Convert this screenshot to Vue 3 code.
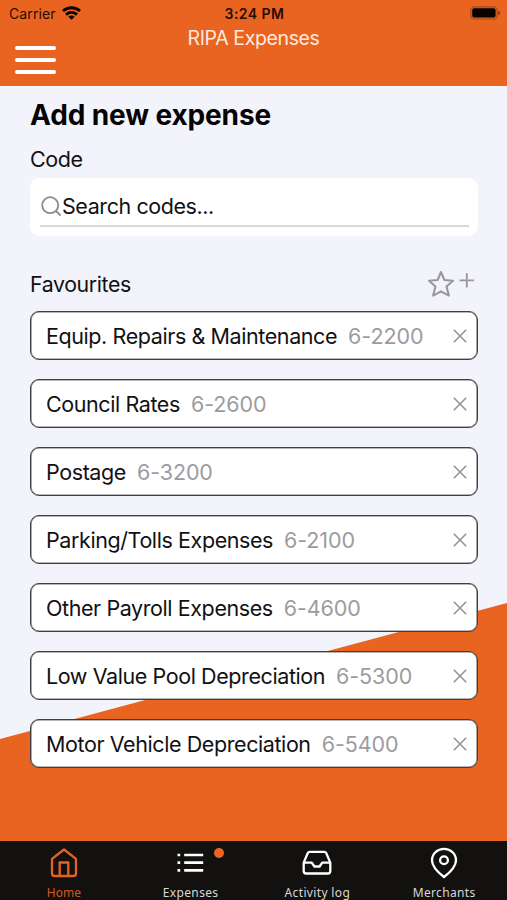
<script setup>
const favourites = [
  { name: 'Equip. Repairs & Maintenance', code: '6-2200' },
  { name: 'Council Rates', code: '6-2600' },
  { name: 'Postage', code: '6-3200' },
  { name: 'Parking/Tolls Expenses', code: '6-2100' },
  { name: 'Other Payroll Expenses', code: '6-4600' },
  { name: 'Low Value Pool Depreciation', code: '6-5300' },
  { name: 'Motor Vehicle Depreciation', code: '6-5400' },
]
</script>

<template>
  <div class="screen">
    <header class="header">
      <div class="status">
        <div class="carrier">
          <span>Carrier</span>
          <svg class="wifi" width="19" height="14" viewBox="0 0 19 14">
            <g fill="none" stroke="currentColor" stroke-width="2.9">
              <path d="M1 5C5.8 .6 13.2 .6 18 5" />
              <path d="M4 8.6C7.2 5.8 11.8 5.8 15 8.6" />
            </g>
            <path fill="currentColor" d="M6.3 10.7C8.1 9.2 10.9 9.2 12.7 10.7L9.5 13.8Z" />
          </svg>
        </div>
        <div class="clock">3:24 PM</div>
        <svg class="battery" width="31" height="14" viewBox="0 0 31 14">
          <rect x=".8" y=".8" width="26.4" height="12.2" rx="3.6" fill="none" stroke="#a04719" stroke-width="1.2" />
          <rect x="2.2" y="2.3" width="23.4" height="9.3" rx="2" fill="#080200" />
          <path d="M28.4 4.8Q30 5.3 30 7T28.4 9.2Z" fill="#7c3510" />
        </svg>
      </div>
      <div class="title">RIPA Expenses</div>
      <button class="menu" aria-label="Menu"><i></i><i></i><i></i></button>
    </header>

    <main class="main">
      <h1>Add new expense</h1>
      <label class="label">Code</label>
      <div class="search">
        <div class="field">
          <svg width="21" height="21" viewBox="0 0 21 21" fill="none" stroke="#8b8b8e" stroke-width="1.8" stroke-linecap="round">
            <circle cx="9.2" cy="9.2" r="8" />
            <path d="M15 15L19 19" />
          </svg>
          <span>Search codes...</span>
        </div>
      </div>

      <div class="fav-head">
        <span>Favourites</span>
        <svg width="48" height="28" viewBox="0 0 48 28" fill="none" stroke="#98989c" stroke-width="2.1">
          <path stroke-linejoin="round" d="M14 2L17.4 10L26 10.8L19.5 16.5L21.9 25.6L14 21.3L6.1 25.6L8.5 16.5L2 10.8L10.6 10Z" />
          <path stroke-width="1.8" d="M32.6 10.4H47M39.8 3.2V17.4" />
        </svg>
      </div>

      <ul class="list">
        <li v-for="f in favourites" :key="f.code" class="item">
          <span class="name">{{ f.name }}</span>
          <span class="code">{{ f.code }}</span>
          <svg class="close" width="14" height="14" viewBox="0 0 14 14" stroke="#949498" stroke-width="1.6">
            <path d="M.8 .8L13.2 13.2M13.2 .8L.8 13.2" />
          </svg>
        </li>
      </ul>
    </main>

    <nav class="tabs">
      <div class="tab active">
        <svg width="32" height="32" viewBox="0 0 32 32" fill="none" stroke="currentColor" stroke-width="2.3" stroke-linejoin="round">
          <path d="M16 2.5L28 11.8V26.5Q28 29 25.5 29H6.5Q4 29 4 26.5V11.8Z" />
          <path d="M11.7 29V15.5H20.3V29" />
        </svg>
        <span>Home</span>
      </div>
      <div class="tab">
        <svg width="32" height="32" viewBox="0 0 32 32" fill="none" stroke="currentColor" stroke-width="2.7">
          <path d="M9.2 8H28.2M9.2 15.7H28.2M9.2 23.3H28.2" />
          <path d="M2.5 8H5.2M2.5 15.7H5.2M2.5 23.3H5.2" />
        </svg>
        <i class="dot"></i>
        <span>Expenses</span>
      </div>
      <div class="tab">
        <svg width="32" height="32" viewBox="0 0 32 32" fill="none" stroke="currentColor" stroke-width="2.3" stroke-linejoin="round">
          <path d="M8.6 4.8H23.4Q24.6 4.8 25.2 6L29.3 15.6V24Q29.3 26.5 26.8 26.5H5.2Q2.7 26.5 2.7 24V15.6L6.8 6Q7.4 4.8 8.6 4.8Z" />
          <path d="M2.7 15.6H10.8L13.4 19.5H18.6L21.2 15.6H29.3" />
        </svg>
        <span>Activity log</span>
      </div>
      <div class="tab">
        <svg width="32" height="32" viewBox="0 0 32 32" fill="none" stroke="currentColor" stroke-width="2.3" stroke-linejoin="round">
          <path d="M16 30Q4 20.5 4 13.4C4 6.6 9.4 1.8 16 1.8S28 6.6 28 13.4Q28 20.5 16 30Z" />
          <circle cx="16" cy="13.2" r="3.9" />
        </svg>
        <span>Merchants</span>
      </div>
    </nav>
  </div>
</template>

<style>
body { margin: 0; overflow: hidden; }
</style>

<style scoped>
.screen {
  width: 507px;
  height: 900px;
  display: flex;
  flex-direction: column;
  overflow: hidden;
  font-family: Inter, "Liberation Sans", sans-serif;
  color: #111113;
  background: #f2f3fb;
}
.header {
  height: 86px;
  flex: none;
  background: #ea6421;
}
.status {
  display: grid;
  grid-template-columns: 1fr auto 1fr;
  align-items: center;
  height: 28px;
  padding: 0 6px 0 9px;
  font-size: 14px;
  line-height: 28px;
  color: #260d02;
}
.carrier { display: flex; align-items: center; gap: 6px; letter-spacing: .1px; }
.wifi { color: #100500; margin-bottom: 2px; }
.clock { margin-right: 1px; font-weight: 600; letter-spacing: .45px; }
.battery { justify-self: end; margin-bottom: 2px; }
.title {
  height: 18px;
  line-height: 20px;
  text-align: center;
  font-size: 19.5px;
  letter-spacing: -.38px;
  color: #ffe9de;
}
.menu {
  display: flex;
  flex-direction: column;
  gap: 8px;
  padding: 0;
  margin-left: 15px;
  border: 0;
  background: none;
}
.menu i { width: 41px; height: 4px; border-radius: 2px; background: #fff; }
.main {
  flex: 1;
  position: relative;
  z-index: 0;
  box-sizing: border-box;
  padding: 11px 29.5px 0 30px;
}
.main::before {
  content: "";
  position: absolute;
  z-index: -1;
  inset: 517px 0 0;
  background: #ea6421;
  clip-path: polygon(0 136px, 100% 0, 100% 100%, 0 100%);
}
h1 {
  margin: 0;
  font-size: 28px;
  line-height: 36px;
  font-weight: 700;
  letter-spacing: -.12px;
  color: #050506;
}
.label {
  display: block;
  margin-top: 11px;
  font-size: 21.5px;
  line-height: 30px;
  letter-spacing: -.4px;
}
.search {
  box-sizing: border-box;
  height: 58px;
  margin-top: 4px;
  padding: 9px 9px 0 10px;
  border-radius: 9px;
  background: #fff;
}
.field {
  display: flex;
  align-items: center;
  height: 38px;
  border-bottom: 2px solid #d9d9db;
  font-size: 21.5px;
  letter-spacing: -.43px;
}
.field svg { margin-left: 1px; }
.field span { margin-bottom: 1px; }
.fav-head {
  display: flex;
  align-items: center;
  justify-content: space-between;
  height: 30px;
  margin-top: 33px;
  font-size: 21.3px;
  letter-spacing: -.37px;
}
.fav-head svg { margin-right: 3px; }
.list {
  display: grid;
  gap: 19px;
  list-style: none;
  margin: 12px 0 0;
  padding: 0;
}
.item {
  display: flex;
  align-items: center;
  box-sizing: border-box;
  height: 49px;
  padding: 0 9.5px 0 15px;
  border: 1px solid #3f3f43;
  box-shadow: inset 0 0 0 .6px #6f6f73;
  border-radius: 9px;
  background: #fff;
  font-size: 21.5px;
  white-space: nowrap;
}
.name { letter-spacing: -.41px; }
.code { margin-left: 11px; letter-spacing: -.1px; color: #9c9c9f; }
.close { margin-left: auto; }
.tabs {
  display: grid;
  grid-template-columns: repeat(4, 1fr);
  flex: none;
  box-sizing: border-box;
  height: 59px;
  padding-top: 6px;
  background: #12110f;
}
.tab {
  position: relative;
  display: flex;
  flex-direction: column;
  align-items: center;
  color: #fff;
}
.tab svg { margin-left: 1px; }
.tab span {
  margin-top: 5px;
  margin-left: 1px;
  font-family: "Noto Sans", sans-serif;
  font-size: 12px;
  line-height: 17px;
  letter-spacing: .35px;
  color: #d8d8d7;
}
.tab.active { color: #e36422; }
.tab.active span { color: #d05a20; letter-spacing: 0; }
.dot {
  position: absolute;
  left: 87px;
  top: 1px;
  width: 10px;
  height: 10px;
  border-radius: 50%;
  background: #ec6623;
}
</style>
